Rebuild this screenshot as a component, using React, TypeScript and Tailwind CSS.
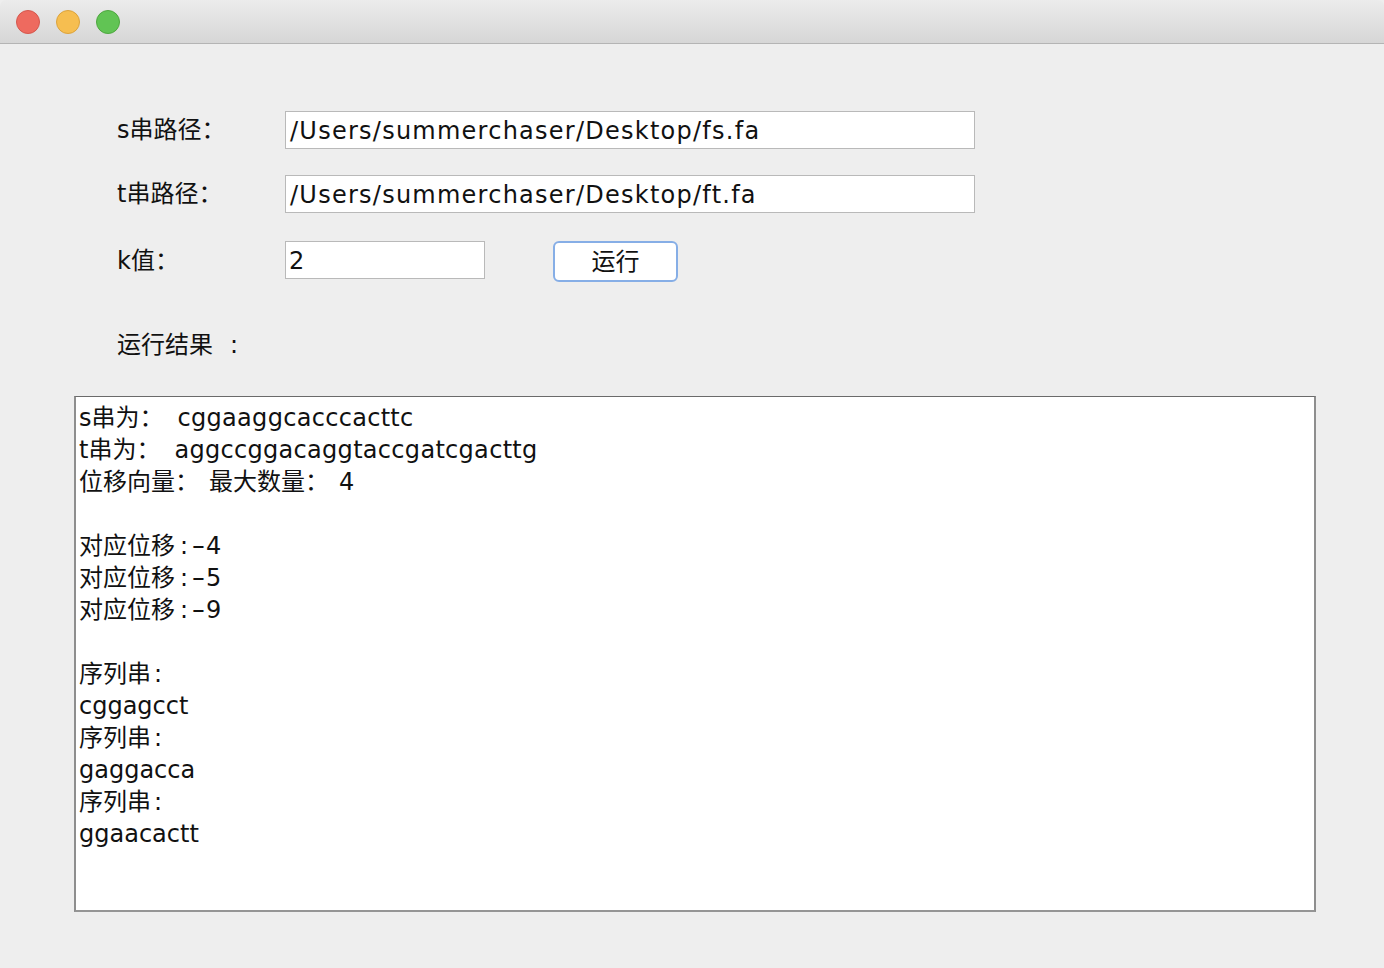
import React from "react";

const font = { fontFamily: '"DejaVu Sans", "Noto Sans CJK SC", sans-serif' };

function Minus({ v }: { v: string }) {
  return (
    <>
      对应位移<span className="ml-[5px] mr-[3px]">:</span>
      <span className="inline-block w-[15px] text-center scale-x-[1.6]">-</span>
      {v}
    </>
  );
}

function Seq() {
  return (
    <>
      序列串<span className="ml-[3px]">:</span>
    </>
  );
}

export default function App() {
  const lines: React.ReactNode[] = [
    <>s串为：<span className="ml-[14px] tracking-[0.3px]">cggaaggcacccacttc</span></>,
    <>t串为：<span className="ml-[14px] tracking-[0.3px]">aggccggacaggtaccgatcgacttg</span></>,
    <>位移向量：<span className="ml-[10px]">最大数量：</span><span className="ml-[10px]">4</span></>,
    "",
    <Minus v="4" />,
    <Minus v="5" />,
    <Minus v="9" />,
    "",
    <Seq />,
    "cggagcct",
    <Seq />,
    "gaggacca",
    <Seq />,
    "ggaacactt",
  ];
  return (
    <div className="w-[1384px] h-[968px] bg-[#eeeeee] flex flex-col overflow-hidden text-[#111]" style={font}>
      <div className="h-[44px] shrink-0 flex items-center gap-[16px] pl-[16px] border-b border-[#b4b4b4] bg-gradient-to-b from-[#ececec] to-[#d6d6d6] rounded-t-[6px]">
        <div className="w-[24px] h-[24px] rounded-full bg-[#ee6a5f] border border-[#d5574d]" />
        <div className="w-[24px] h-[24px] rounded-full bg-[#f6be50] border border-[#dca33c]" />
        <div className="w-[24px] h-[24px] rounded-full bg-[#61c454] border border-[#4ea73f]" />
      </div>
      <div className="flex flex-col pt-[67px]">
        <div className="flex items-center pl-[117px] h-[38px]">
          <div className="w-[168px] text-[24px] leading-none">s串路径：</div>
          <div className="w-[690px] h-[38px] bg-white border border-[#b9b9b9] flex items-center pl-[4px] pt-[2px] text-[24px] leading-none tracking-[1.25px]">/Users/summerchaser/Desktop/fs.fa</div>
        </div>
        <div className="flex items-center pl-[117px] h-[38px] mt-[26px]">
          <div className="w-[168px] text-[24px] leading-none">t串路径：</div>
          <div className="w-[690px] h-[38px] bg-white border border-[#b9b9b9] flex items-center pl-[4px] pt-[2px] text-[24px] leading-none tracking-[1.25px]">/Users/summerchaser/Desktop/ft.fa</div>
        </div>
        <div className="flex items-start pl-[117px] h-[41px] mt-[28px]">
          <div className="w-[168px] h-[38px] flex items-center pt-[2px] text-[24px] leading-none">k值：</div>
          <div className="w-[200px] h-[38px] bg-white border border-[#b9b9b9] flex items-center pl-[3px] pt-[2px] text-[24px] leading-none">2</div>
          <div className="ml-[68px] w-[125px] h-[41px] bg-white border-2 border-[#86aee6] rounded-[6px] flex items-center justify-center text-[24px] leading-none">运行</div>
        </div>
        <div className="pl-[117px] mt-[47px] h-[32px] flex items-center text-[24px] leading-none">
          运行结果<span className="ml-[17px]">:</span>
        </div>
        <div className="ml-[74px] mt-[35px] w-[1242px] h-[516px] bg-white border-t border-t-[#6a6a6a] border-l-2 border-l-[#8e8e8e] border-r-2 border-r-[#8e8e8e] border-b-2 border-b-[#959595] pl-[3px] pt-[5px]">
          {lines.map((l, i) => (
            <div key={i} className="h-[32px] leading-[32px] text-[24px] whitespace-pre">{l}</div>
          ))}
        </div>
      </div>
    </div>
  );
}
